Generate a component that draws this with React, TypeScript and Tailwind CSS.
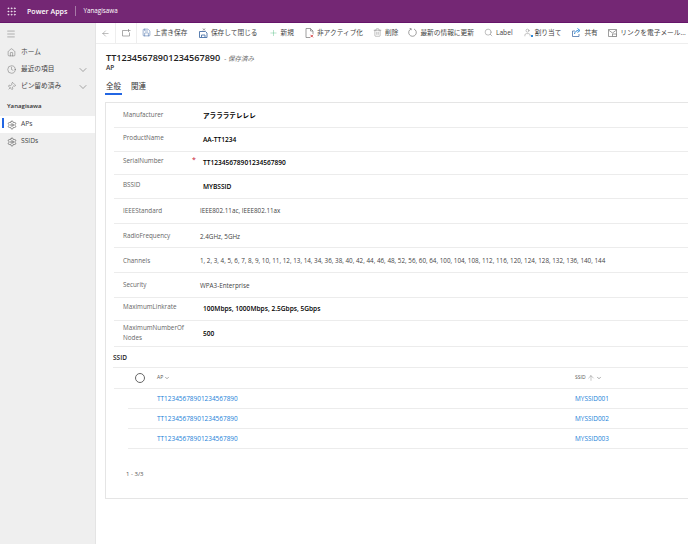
import type { ReactNode } from "react";
import { ArrowLeft, Save, Plus, Trash2, Search, User, Home, Clock, ChevronDown, Pin, Menu, Settings, ArrowUp, Grip } from "lucide-react";

const font = "font-['Open_Sans','Noto_Sans_CJK_JP',sans-serif]";

function Cmd({ icon, label, cls = "" }: { icon: ReactNode; label: string; cls?: string }) {
  return (
    <div className={`flex items-center gap-[3px] text-[6.7px] text-[#444] whitespace-nowrap shrink-0 ${cls}`}>
      <span className="w-[9px] flex justify-center">{icon}</span>
      <span>{label}</span>
    </div>
  );
}

function Row({ label, value, h, lp, vp, bold = true, req = false }: { label: ReactNode; value: string; h: string; lp: string; vp: string; bold?: boolean; req?: boolean }) {
  return (
    <div className={`flex ml-[8px] ${h} border-b border-[#ececec]`}>
      <div className={`w-[80px] ml-[9px] text-[6.3px] leading-[10px] text-[#666] shrink-0 relative ${lp}`}>
        {label}
        {req && <span className="absolute left-[69px] top-[3px] text-[#c8102e] text-[7px]">*</span>}
      </div>
      <div className={`leading-[10px] whitespace-nowrap ${vp} ${bold ? "text-[6.6px] font-semibold text-black" : "-ml-[3px] text-[6.3px] text-[#444]"}`}>{value}</div>
    </div>
  );
}

function Nav({ icon, label, active = false, chevron = false }: { icon: ReactNode; label: string; active?: boolean; chevron?: boolean }) {
  return (
    <div className={`relative flex items-center h-[17px] pl-[7px] pr-[6px] text-[6.7px] text-[#444] ${active ? "bg-white" : ""}`}>
      {active && <div className="absolute left-[2px] top-[2px] bottom-[5px] w-[2px] bg-[#2266e3]" />}
      <span className="w-[14px] flex justify-start">{icon}</span>
      <span className="flex-1">{label}</span>
      {chevron && <ChevronDown size={12} strokeWidth={1} className="text-[#555]" />}
    </div>
  );
}

function GridRow({ ap, ssid }: { ap: string; ssid: string }) {
  return (
    <div className="flex h-[20px] items-center ml-[22px] border-b border-[#ececec] text-[6.45px] text-[#1a7fd8]">
      <span className="w-[418px] ml-[29px] shrink-0">{ap}</span>
      <span>{ssid}</span>
    </div>
  );
}

function PopOut() {
  return (
    <svg width="9" height="8" viewBox="0 0 9 8" fill="none" stroke="#888" strokeWidth="0.7">
      <path d="M5 1.5H0.5V7H7.5V3.5" />
      <path d="M6.5 0V3M5.2 1.5H8.5" />
    </svg>
  );
}

function SaveClose() {
  return (
    <svg width="9" height="10" viewBox="0 0 9 10" fill="none" stroke="#4a72a8" strokeWidth="0.9">
      <path d="M0.5 3.5H6.5L8 5V9.5H0.5Z" />
      <path d="M2.5 9.5V7H6V9.5" />
      <path d="M4 0.5L6 2.5M6 0.5L4 2.5" stroke="#666" strokeWidth="0.7" />
    </svg>
  );
}

function Deactivate() {
  return (
    <svg width="9" height="10" viewBox="0 0 9 10" fill="none" stroke="#777" strokeWidth="0.7">
      <path d="M5 9.5H1V0.5H5.5L8 3V6" />
      <path d="M5.5 0.5V3H8" />
      <path d="M5.5 6.8L8 9.3M8 6.8L5.5 9.3" stroke="#d13438" strokeWidth="0.9" />
    </svg>
  );
}

function Refresh() {
  return (
    <svg width="9" height="9" viewBox="0 0 9 9" fill="none" stroke="#777" strokeWidth="0.7">
      <path d="M3 1A3.8 3.8 0 1 0 6 1" />
      <path d="M1.6 0.6H3.2V2.2" />
    </svg>
  );
}

function Assign() {
  return (
    <span className="relative flex">
      <User size={9} strokeWidth={1} className="text-[#666]" />
      <span className="absolute right-[-1px] bottom-[0px] w-[2px] h-[2px] bg-[#2b88d8]" />
    </span>
  );
}

function ShareIcon() {
  return (
    <svg width="9" height="9" viewBox="0 0 9 9" fill="none">
      <path d="M3 3H0.5V8.5H7V6" stroke="#4a72a8" strokeWidth="0.8" />
      <path d="M2.5 6C3 3.5 4.5 2.5 6.5 2.5M5.5 0.5L8 2.5L5.5 4.5" stroke="#2b88d8" strokeWidth="1" />
    </svg>
  );
}

function MailLink() {
  return (
    <svg width="9" height="8" viewBox="0 0 9 8" fill="none" stroke="#777" strokeWidth="0.7">
      <path d="M0.5 0.5H8.5V7.5H0.5Z" />
      <path d="M0.5 1L4.5 4L8.5 1" />
      <path d="M4.5 5H8.5V7.5H4.5Z" fill="white" />
    </svg>
  );
}

const gear = <Settings size={10} strokeWidth={1.4} className="text-[#444]" />;

export default function App() {
  return (
    <div className={`w-[688px] h-[544px] overflow-hidden flex flex-col bg-white ${font}`}>
      <header className="h-[23px] shrink-0 bg-[#742774] border-b border-[#66156a] flex items-center text-white">
        <Grip size={11} strokeWidth={1.5} className="ml-[6px]" />
        <span className="ml-[10px] text-[7.1px] font-semibold">Power Apps</span>
        <span className="ml-[8px] h-[10px] w-px bg-[#a77aa7]" />
        <span className="ml-[7px] text-[6.3px]">Yanagisawa</span>
      </header>
      <div className="flex flex-1 min-h-0">
        <aside className="w-[96px] shrink-0 bg-[#efefef] border-r border-[#e4e4e4]">
          <div className="h-[21px] pl-[6px] flex items-center">
            <Menu size={10} strokeWidth={1} className="text-[#555]" />
          </div>
          <div>
            <Nav icon={<Home size={9} strokeWidth={1} />} label="ホーム" />
            <Nav icon={<Clock size={9} strokeWidth={1} />} label="最近の項目" chevron />
            <Nav icon={<Pin size={9} strokeWidth={1} className="rotate-45" />} label="ピン留め済み" chevron />
          </div>
          <div className="mt-[5px] pl-[7px] text-[6.1px] font-semibold text-[#333] h-[16px] leading-[12px]">Yanagisawa</div>
          <Nav icon={gear} label="APs" active />
          <Nav icon={gear} label="SSIDs" />
        </aside>
        <main className="flex-1 min-w-0 flex flex-col">
          <div className="h-[21px] shrink-0 flex items-center border-b border-[#eeeeee] overflow-hidden">
            <div className="w-[20px] h-full flex items-center justify-center border-r border-[#eeeeee] shrink-0"><ArrowLeft size={9} strokeWidth={1} className="text-[#555]" /></div>
            <div className="w-[21px] h-full flex items-center justify-center border-r border-[#eeeeee] shrink-0"><PopOut /></div>
            <div className="flex items-center ml-[5px]">
              <Cmd icon={<Save size={9} strokeWidth={1.3} className="text-[#315fa0]" />} label="上書き保存" />
              <Cmd cls="ml-[11.5px]" icon={<SaveClose />} label="保存して閉じる" />
              <Cmd cls="ml-[11px]" icon={<Plus size={10} strokeWidth={1} className="text-[#3cb371]" />} label="新規" />
              <Cmd cls="ml-[11px]" icon={<Deactivate />} label="非アクティブ化" />
              <Cmd cls="ml-[10px]" icon={<Trash2 size={9} strokeWidth={1} className="text-[#555]" />} label="削除" />
              <Cmd cls="ml-[10px]" icon={<Refresh />} label="最新の情報に更新" />
              <Cmd cls="ml-[10px]" icon={<Search size={9} strokeWidth={1} className="text-[#555]" />} label="Label" />
              <Cmd cls="ml-[10px]" icon={<Assign />} label="割り当て" />
              <Cmd cls="ml-[11px]" icon={<ShareIcon />} label="共有" />
              <Cmd cls="ml-[10.5px]" icon={<MailLink />} label="リンクを電子メール..." />
            </div>
          </div>
          <div className="pl-[10px] pt-[7px] h-[36px] shrink-0">
            <div className="flex items-baseline gap-[4px] leading-[13px]">
              <span className="text-[9.1px] font-semibold text-[#222]">TT12345678901234567890</span>
              <span className="text-[6.5px] italic text-[#666]">- 保存済み</span>
            </div>
            <div className="-mt-[3px] text-[6.5px] font-semibold text-[#333] leading-[11px]">AP</div>
          </div>
          <div className="pl-[9px] flex gap-[9px] text-[7.5px] text-[#333] h-[22px] shrink-0">
            <span className="border-b-2 border-[#2266e3] h-[15px] leading-[13px] px-px">全般</span>
            <span className="leading-[13px]">関連</span>
          </div>
          <section className="ml-[9px] h-[397px] shrink-0 border border-r-0 border-[#e5e5e5]">
            <Row label="Manufacturer" value="アラララテレレレ" h="h-[25px]" lp="pt-[7px]" vp="pt-[8px]" />
            <Row label="ProductName" value="AA-TT1234" h="h-[24px]" lp="pt-[5px]" vp="pt-[7px]" />
            <Row label="SerialNumber" value="TT12345678901234567890" h="h-[23px]" lp="pt-[4px]" vp="pt-[6px]" req />
            <Row label="BSSID" value="MYBSSID" h="h-[24px]" lp="pt-[5px]" vp="pt-[7px]" />
            <Row label="IEEEStandard" value="IEEE802.11ac, IEEE802.11ax" h="h-[25px]" lp="pt-[7px]" vp="pt-[7px]" bold={false} />
            <Row label="RadioFrequency" value="2.4GHz, 5GHz" h="h-[24px]" lp="pt-[7px]" vp="pt-[8px]" bold={false} />
            <Row label="Channels" value="1, 2, 3, 4, 5, 6, 7, 8, 9, 10, 11, 12, 13, 14, 34, 36, 38, 40, 42, 44, 46, 48, 52, 56, 60, 64, 100, 104, 108, 112, 116, 120, 124, 128, 132, 136, 140, 144" h="h-[25px]" lp="pt-[8px]" vp="pt-[8px]" bold={false} />
            <Row label="Security" value="WPA3-Enterprise" h="h-[25px]" lp="pt-[7px]" vp="pt-[8px]" bold={false} />
            <Row label="MaximumLinkrate" value="100Mbps, 1000Mbps, 2.5Gbps, 5Gbps" h="h-[23px]" lp="pt-[4px]" vp="pt-[6px]" />
            <Row label={<>MaximumNumberOf<br />Nodes</>} value="500" h="h-[26px]" lp="pt-[2px]" vp="pt-[8px]" />
            <div className="h-[21px] ml-[7px] border-b border-[#ececec] text-[6.5px] font-semibold text-[#222] leading-[21px]">SSID</div>
            <div className="h-[21px] ml-[8px] border-b border-[#ececec] flex items-center text-[5px] text-[#555]">
              <span className="w-[10px] h-[10px] ml-[21px] rounded-full border border-[#666] shrink-0" />
              <span className="ml-[12px] w-[418px] shrink-0 flex items-center gap-[1px]">AP <ChevronDown size={6} /></span>
              <span className="flex items-center gap-[1px]">SSID <ArrowUp size={8} strokeWidth={1} /><ChevronDown size={6} /></span>
            </div>
            <GridRow ap="TT12345678901234567890" ssid="MYSSID001" />
            <GridRow ap="TT12345678901234567890" ssid="MYSSID002" />
            <GridRow ap="TT12345678901234567890" ssid="MYSSID003" />
            <div className="ml-[20px] mt-[21px] text-[6px] text-[#555]">1 - 3/3</div>
          </section>
        </main>
      </div>
    </div>
  );
}
